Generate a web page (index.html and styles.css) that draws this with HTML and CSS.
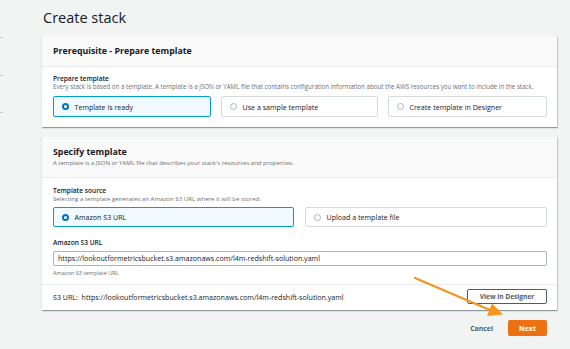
FILE: index.html
```html
<!DOCTYPE html>
<html>
<head>
<meta charset="utf-8">
<link rel="stylesheet" href="styles.css">
</head>
<body>
<div class="page">
  <div class="side">
    <span class="mark m1"></span>
    <span class="mark m2"></span>
    <span class="mark m3"></span>
  </div>
  <main class="main">
    <h1 class="title">Create stack</h1>

    <section class="panel">
      <header class="panel-head p1">
        <h2 class="panel-title">Prerequisite - Prepare template</h2>
      </header>
      <div class="panel-body b1">
        <div class="label">Prepare template</div>
        <div class="desc">Every stack is based on a template. A template is a JSON or YAML file that contains configuration information about the AWS resources you want to include in the stack.</div>
        <div class="tiles three">
          <div class="tile selected"><span class="radio on"></span>Template is ready</div>
          <div class="tile"><span class="radio"></span>Use a sample template</div>
          <div class="tile"><span class="radio"></span>Create template in Designer</div>
        </div>
      </div>
    </section>

    <section class="panel">
      <header class="panel-head p2">
        <h2 class="panel-title">Specify template</h2>
        <div class="desc">A template is a JSON or YAML file that describes your stack's resources and properties.</div>
      </header>
      <div class="panel-body b2">
        <div class="label">Template source</div>
        <div class="desc">Selecting a template generates an Amazon S3 URL where it will be stored.</div>
        <div class="tiles two">
          <div class="tile selected"><span class="radio on"></span>Amazon S3 URL</div>
          <div class="tile"><span class="radio"></span>Upload a template file</div>
        </div>
        <div class="field">
          <div class="label">Amazon S3 URL</div>
          <div class="input">https://lookoutformetricsbucket.s3.amazonaws.com/l4m-redshift-solution.yaml</div>
          <div class="hint">Amazon S3 template URL</div>
        </div>
      </div>
      <div class="panel-foot">
        <span class="s3url">S3 URL:&nbsp; https://lookoutformetricsbucket.s3.amazonaws.com/l4m-redshift-solution.yaml</span>
        <button class="btn-outline">View in Designer</button>
      </div>
    </section>

    <div class="actions">
      <button class="btn-link">Cancel</button>
      <button class="btn-primary">Next</button>
    </div>
  </main>
</div>
<svg class="arrow" width="570" height="349" viewBox="0 0 570 349">
  <line x1="415" y1="278" x2="490" y2="310" stroke="#f7941d" stroke-width="2.2" stroke-linecap="round"/>
  <polygon points="503,314.5 487,316 492,303.5" fill="#f7941d"/>
</svg>
</body>
</html>
```

FILE: styles.css
```css
* { box-sizing: border-box; }
html, body {
  margin: 0;
  padding: 0;
  background: #f2f3f3;
  font-family: "Open Sans", "Noto Sans", sans-serif;
  color: #16191f;
}
.page {
  display: flex;
  width: 570px;
  height: 349px;
  overflow: hidden;
}
.side {
  width: 42px;
  flex: none;
  display: flex;
  flex-direction: column;
}
.mark {
  display: block;
  width: 3px;
  height: 1px;
  background: #c4cacb;
}
.m1 { margin-top: 37px; }
.m2 { margin-top: 37px; }
.m3 { margin-top: 36px; }

.main {
  width: 515px;
  flex: none;
}
.title {
  margin: 8px 0 8px 1px;
  font-size: 14.5px;
  line-height: 20px;
  font-weight: 400;
  color: #16191f;
}
.panel {
  background: #fff;
  box-shadow: 0 1px 1px rgba(0, 28, 36, 0.3), 1px 1px 1px rgba(0, 28, 36, 0.15);
  margin-bottom: 10px;
}
.panel-head {
  background: #fafafa;
  border-bottom: 1px solid #eaeded;
  padding: 0 10px 0 11px;
}
.p1 { padding-top: 8px; padding-bottom: 7px; }
.p2 { padding-top: 9px; padding-bottom: 10px; }
.panel-title {
  margin: 0;
  font-size: 8.8px;
  line-height: 15px;
  font-weight: 700;
}
.p2 .panel-title { line-height: 13px; }
.panel-body {
  padding: 7px 10px 10px 11px;
}
.b2 { padding-top: 8px; padding-bottom: 7px; }
.label {
  font-size: 6.6px;
  line-height: 9px;
  font-weight: 600;
  color: #16191f;
}
.desc {
  font-size: 6.1px;
  line-height: 8px;
  color: #687078;
  white-space: nowrap;
}
.p2 .desc { font-size: 6px; }
.b1 .desc { font-size: 6.2px; }
.tiles {
  display: grid;
  margin-top: 5px;
}
.three { grid-template-columns: 158px 157px 159px; column-gap: 10px; }
.two { grid-template-columns: 241px 242px; column-gap: 11px; margin-top: 4px; }
.tile {
  height: 21px;
  border: 1px solid #d5dbdb;
  border-radius: 2px;
  display: flex;
  align-items: center;
  padding-left: 8px;
  font-size: 7.1px;
  font-weight: 500;
  color: #16191f;
  white-space: nowrap;
}
.two .tile { height: 20px; }
.tile.selected {
  background: #f1faff;
  border-color: #00a1c9;
}
.radio {
  width: 7px;
  height: 7px;
  border-radius: 50%;
  border: 1px solid #aab7b8;
  background: #fff;
  margin-right: 5.5px;
  flex: none;
}
.radio.on {
  border: 2px solid #0073bb;
}
.field { margin-top: 11px; }
.input {
  margin-top: 4px;
  height: 15px;
  border: 1px solid #aab7b8;
  border-radius: 2px;
  padding-left: 4px;
  font-size: 7.1px;
  line-height: 13px;
  color: #16191f;
  white-space: nowrap;
}
.hint {
  margin-top: 3px;
  font-size: 5.6px;
  line-height: 8px;
  color: #687078;
}
.panel-foot {
  border-top: 1px solid #eaeded;
  display: flex;
  align-items: center;
  justify-content: space-between;
  padding: 4px 10px 6px 11px;
}
.s3url {
  font-size: 7.1px;
  color: #16191f;
  white-space: nowrap;
}
button {
  font-family: inherit;
  cursor: pointer;
}
.btn-outline {
  width: 80px;
  height: 15px;
  border: 1px solid #545b64;
  border-radius: 2px;
  background: #fff;
  color: #545b64;
  font-size: 6.6px;
  font-weight: 700;
  padding: 0;
}
.actions {
  display: flex;
  justify-content: flex-end;
  align-items: center;
  gap: 15px;
  padding-right: 10px;
}
.btn-link {
  background: none;
  border: none;
  padding: 0;
  color: #545b64;
  font-size: 6.9px;
  font-weight: 700;
}
.btn-primary {
  width: 39px;
  height: 16px;
  border: none;
  border-radius: 2px;
  background: #ec7211;
  color: #fff;
  font-size: 7px;
  font-weight: 700;
  padding: 0;
}
.arrow {
  position: absolute;
  left: 0;
  top: 0;
  pointer-events: none;
}
```
